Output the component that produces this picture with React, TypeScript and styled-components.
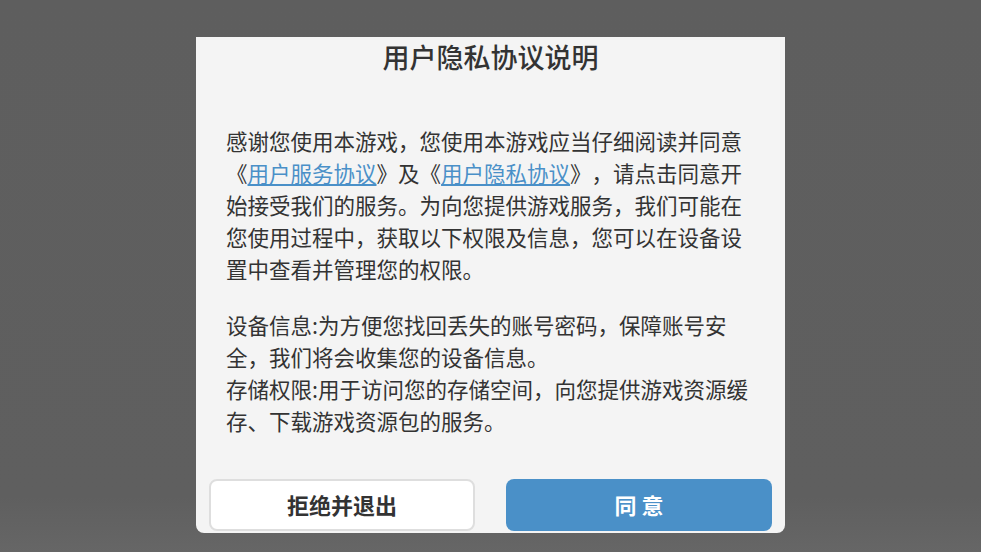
import React from 'react';
import styled, { createGlobalStyle } from 'styled-components';

const GlobalStyle = createGlobalStyle`
  html, body {
    margin: 0;
    padding: 0;
    background: #5f5f5f;
  }
  body {
    font-family: "Noto Sans CJK SC", "Noto Sans", sans-serif;
  }
`;

const Overlay = styled.div`
  width: 981px;
  height: 552px;
  box-sizing: border-box;
  padding-top: 37px;
  display: flex;
  flex-direction: column;
  align-items: center;
  background: linear-gradient(#5e5e5e, #5f5f5f 90%, #666);
`;

const Dialog = styled.div`
  width: 589px;
  height: 496px;
  box-sizing: border-box;
  background: #f4f4f4;
  border-radius: 0 0 8px 8px;
  display: flex;
  flex-direction: column;
`;

const Title = styled.h2`
  margin: 0;
  height: 40px;
  line-height: 40px;
  text-align: center;
  font-size: 27px;
  font-weight: 500;
  color: #333;
`;

const Content = styled.div`
  padding: 0 30px;
  margin-top: 48px;
  color: #333;
  font-size: 21.5px;
  line-height: 32px;
  text-spacing-trim: space-all;
`;

const Paragraph = styled.p<{ gap?: number }>`
  margin: ${({ gap }) => gap ?? 0}px 0 0;
`;

const Link = styled.a`
  color: #4a90c8;
  text-decoration: underline;
  text-underline-offset: 2px;
  cursor: pointer;
`;

const ButtonRow = styled.div`
  margin-top: auto;
  padding: 0 13px 2px;
  display: flex;
  justify-content: space-between;
`;

const Button = styled.button<{ primary?: boolean }>`
  width: 266px;
  height: 52px;
  margin: 0;
  padding: 0 0 3px;
  box-sizing: border-box;
  border-radius: 8px;
  font-family: "Noto Sans CJK SC", "Noto Sans", sans-serif;
  font-size: 22px;
  font-weight: 700;
  cursor: pointer;
  background: ${({ primary }) => (primary ? '#4a90c8' : '#ffffff')};
  color: ${({ primary }) => (primary ? '#ffffff' : '#333')};
  border: ${({ primary }) => (primary ? 'none' : '2px solid #dedede')};
`;

export default function App() {
  return (
    <>
      <GlobalStyle />
      <Overlay>
        <Dialog>
          <Title>用户隐私协议说明</Title>
          <Content>
            <Paragraph>
              感谢您使用本游戏，您使用本游戏应当仔细阅读并同意《<Link>用户服务协议</Link>》及《
              <Link>用户隐私协议</Link>
              》，请点击同意开始接受我们的服务。为向您提供游戏服务，我们可能在您使用过程中，获取以下权限及信息，您可以在设备设置中查看并管理您的权限。
            </Paragraph>
            <Paragraph gap={24}>
              设备信息:为方便您找回丢失的账号密码，保障账号安全，我们将会收集您的设备信息。
              <br />
              存储权限:用于访问您的存储空间，向您提供游戏资源缓存、下载游戏资源包的服务。
            </Paragraph>
          </Content>
          <ButtonRow>
            <Button>拒绝并退出</Button>
            <Button primary>同 意</Button>
          </ButtonRow>
        </Dialog>
      </Overlay>
    </>
  );
}
